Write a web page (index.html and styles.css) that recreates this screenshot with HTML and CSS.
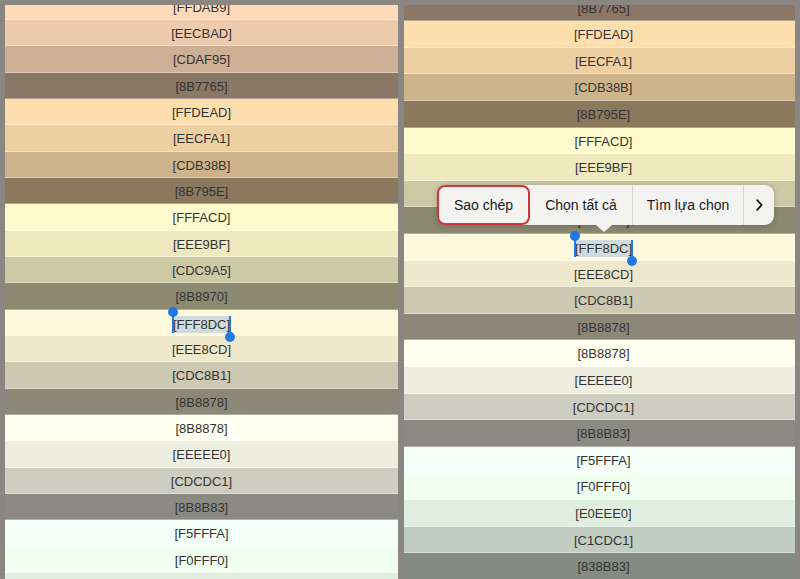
FILE: index.html
```html
<!DOCTYPE html>
<html lang="vi">
<head>
<meta charset="utf-8">
<title>Colors</title>
<link rel="stylesheet" href="styles.css">
</head>
<body>
<div class="screen">
  <div class="panel panel-left">
    <div class="list list-left">
      <div class="row" style="background:#FFDAB9">[FFDAB9]</div>
      <div class="row" style="background:#EECBAD">[EECBAD]</div>
      <div class="row" style="background:#CDAF95">[CDAF95]</div>
      <div class="row" style="background:#8B7765">[8B7765]</div>
      <div class="row" style="background:#FFDEAD">[FFDEAD]</div>
      <div class="row" style="background:#EECFA1">[EECFA1]</div>
      <div class="row" style="background:#CDB38B">[CDB38B]</div>
      <div class="row" style="background:#8B795E">[8B795E]</div>
      <div class="row" style="background:#FFFACD">[FFFACD]</div>
      <div class="row" style="background:#EEE9BF">[EEE9BF]</div>
      <div class="row" style="background:#CDC9A5">[CDC9A5]</div>
      <div class="row" style="background:#8B8970">[8B8970]</div>
      <div class="row" style="background:#FFF8DC"><span class="sel"><span class="handle h-start"></span>[FFF8DC]<span class="handle h-end"></span></span></div>
      <div class="row" style="background:#EEE8CD">[EEE8CD]</div>
      <div class="row" style="background:#CDC8B1">[CDC8B1]</div>
      <div class="row" style="background:#8B8878">[8B8878]</div>
      <div class="row" style="background:#FFFFF0">[8B8878]</div>
      <div class="row" style="background:#EEEEE0">[EEEEE0]</div>
      <div class="row" style="background:#CDCDC1">[CDCDC1]</div>
      <div class="row" style="background:#8B8B83">[8B8B83]</div>
      <div class="row" style="background:#F5FFFA">[F5FFFA]</div>
      <div class="row" style="background:#F0FFF0">[F0FFF0]</div>
      <div class="row" style="background:#E0EEE0">[E0EEE0]</div>
    </div>
  </div>
  <div class="panel panel-right">
    <div class="list list-right">
      <div class="row" style="background:#8B7765">[8B7765]</div>
      <div class="row" style="background:#FFDEAD">[FFDEAD]</div>
      <div class="row" style="background:#EECFA1">[EECFA1]</div>
      <div class="row" style="background:#CDB38B">[CDB38B]</div>
      <div class="row" style="background:#8B795E">[8B795E]</div>
      <div class="row" style="background:#FFFACD">[FFFACD]</div>
      <div class="row" style="background:#EEE9BF">[EEE9BF]</div>
      <div class="row" style="background:#CDC9A5">[CDC9A5]</div>
      <div class="row" style="background:#8B8970">[8B8970]</div>
      <div class="row" style="background:#FFF8DC"><span class="sel"><span class="handle h-start"></span>[FFF8DC]<span class="handle h-end"></span></span></div>
      <div class="row" style="background:#EEE8CD">[EEE8CD]</div>
      <div class="row" style="background:#CDC8B1">[CDC8B1]</div>
      <div class="row" style="background:#8B8878">[8B8878]</div>
      <div class="row" style="background:#FFFFF0">[8B8878]</div>
      <div class="row" style="background:#EEEEE0">[EEEEE0]</div>
      <div class="row" style="background:#CDCDC1">[CDCDC1]</div>
      <div class="row" style="background:#8B8B83">[8B8B83]</div>
      <div class="row" style="background:#F5FFFA">[F5FFFA]</div>
      <div class="row" style="background:#F0FFF0">[F0FFF0]</div>
      <div class="row" style="background:#E0EEE0">[E0EEE0]</div>
      <div class="row" style="background:#C1CDC1">[C1CDC1]</div>
      <div class="row" style="background:#838B83">[838B83]</div>
    </div>
    <div class="menu">
      <div class="menu-item item-copy">Sao chép</div>
      <div class="menu-item item-all">Chọn tất cả</div>
      <div class="menu-item item-find">Tìm lựa chọn</div>
      <div class="menu-item item-more">
        <svg width="7" height="12" viewBox="0 0 7 12"><path d="M1.2 1.2 L5.6 6 L1.2 10.8" fill="none" stroke="#111" stroke-width="1.8" stroke-linecap="round" stroke-linejoin="round"/></svg>
      </div>
    </div>
  </div>
</div>
</body>
</html>
```

FILE: styles.css
```css
html, body {
  margin: 0;
  padding: 0;
}

body {
  width: 800px;
  height: 579px;
  overflow: hidden;
  background: #8a8783;
  font-family: "Liberation Sans", Arial, sans-serif;
}

.screen {
  display: flex;
  gap: 6px;
  padding: 5px 5px 0 5px;
  height: 579px;
  box-sizing: border-box;
}

.panel {
  position: relative;
  height: 574px;
  overflow: hidden;
}

.panel-left {
  width: 393px;
}

.panel-right {
  width: 391px;
}

.list-left {
  margin-top: -11.4px;
}

.list-right {
  margin-top: -10.3px;
}

.row {
  box-sizing: border-box;
  text-align: center;
  font-size: 13px;
  color: #333;
  padding-top: 2px;
  border-bottom: 1px solid rgba(255, 255, 255, 0.35);
}

.list-left .row {
  height: 26.33px;
  line-height: 23.33px;
}

.list-right .row {
  height: 26.6px;
  line-height: 23.6px;
  padding-left: 8px;
}

.sel {
  position: relative;
  display: inline-block;
  line-height: 17px;
  vertical-align: middle;
  background: rgba(40, 120, 230, 0.22);
}

.handle {
  position: absolute;
  width: 2px;
  height: 21px;
  background: #1f78e4;
}

.handle::after {
  content: "";
  position: absolute;
  left: -4px;
  width: 10px;
  height: 10px;
  border-radius: 50%;
  background: #1f78e4;
}

.h-start {
  left: -1px;
  top: -4px;
}

.h-start::after {
  top: -5px;
}

.h-end {
  right: -1px;
  top: 0;
}

.h-end::after {
  bottom: -5px;
}

.menu {
  position: absolute;
  left: 33px;
  top: 180px;
  height: 40px;
  display: flex;
  align-items: stretch;
  background: #f3f3f2;
  border-radius: 9px;
  box-shadow: 0 1px 6px rgba(0, 0, 0, 0.22);
  font-size: 14px;
  color: #1a1a1a;
}

.menu::after {
  content: "";
  position: absolute;
  left: 159px;
  bottom: -7px;
  border-left: 8px solid transparent;
  border-right: 8px solid transparent;
  border-top: 7px solid #f3f3f2;
}

.menu-item {
  display: flex;
  align-items: center;
  justify-content: center;
  box-sizing: border-box;
  border-left: 1px solid #d4d4d2;
  white-space: nowrap;
}

.item-copy {
  width: 93px;
  border: 2px solid #d2343b;
  border-radius: 8px;
}

.item-all {
  width: 102px;
  border-left: none;
}

.item-find {
  width: 111px;
}

.item-more {
  width: 31px;
}
```
